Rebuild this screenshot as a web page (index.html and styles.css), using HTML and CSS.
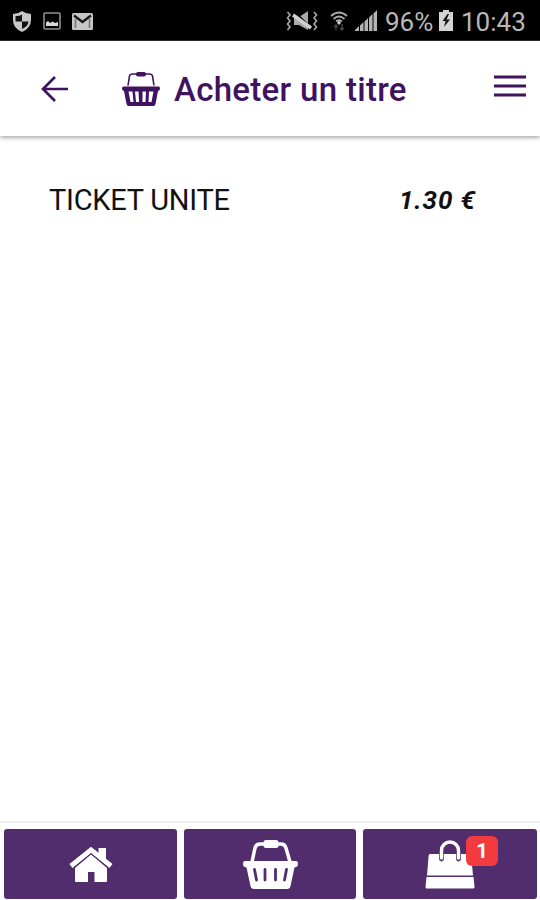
FILE: index.html
```
<!DOCTYPE html>
<html lang="fr">
<head>
  <meta charset="UTF-8">
  <title>Acheter un titre</title>
  <meta name="viewport" content="width=device-width, initial-scale=1.0">
  <link rel="stylesheet" href="styles.css">
</head>
<body>
  <div class="status-bar">
    <div class="status-left">
      <svg width="20" height="23" viewBox="0 0 20 23">
        <path d="M10 1Q14 4 19 4V10Q19 18 10 22Q1 18 1 10V4Q6 4 10 1Z" fill="#c8c8c8"/>
        <path d="M10 4.5V11.5H3.5V6Q7 6.5 10 4.5ZM10 11.5H16.5Q16 16.5 10 19Z" fill="#111"/>
      </svg>
      <svg width="18" height="18" viewBox="0 0 18 18">
        <rect x="1" y="1" width="16" height="16" rx="1" fill="none" stroke="#909090" stroke-width="1.6"/>
        <path d="M3 14V10.500L5 9L7 11L10 9.500L12 11L15 10V14Z" fill="#d8d8d8"/>
      </svg>
      <svg width="21" height="17" viewBox="0 0 21 17">
        <rect width="21" height="17" rx="1.5" fill="#c6c6c6"/>
        <path d="M2 2.5L10.5 9L19 2.5" fill="none" stroke="#171717" stroke-width="2.4"/>
        <path d="M3.5 6V15M17.5 6V15" stroke="#777" stroke-width="1.6"/>
      </svg>
    </div>
    <div class="status-right">
      <svg class="mute" width="32" height="20" viewBox="0 0 32 20">
        <path d="M8 6H13L22 0V19L13 14H8Z" fill="#aaa"/>
        <path d="M7 0L26 18" stroke="#000" stroke-width="2.5"/>
        <path d="M7 4L25 17" stroke="#d0d0d0" stroke-width="3.5"/>
        <path d="M1.500 1L4 4L1.500 7L4 10L1.500 13L4 16L1.500 19M28 1L30.500 4L28 7L30.500 10L28 13L30.500 16L28 19" fill="none" stroke="#aaa" stroke-width="1.6"/>
      </svg>
      <svg class="wifi" width="18" height="20" viewBox="0 0 18 20">
        <path d="M1 5Q9-2 17 5M3.500 8Q9 3 14.500 8M6 10.500Q9 8 12 10.500" fill="none" stroke="#aaa" stroke-width="1.7"/>
        <path d="M9 9L11 12L9 14L7 12Z" fill="#ccc"/>
        <path d="M6 14V19M4 16L6 14L8 16M12 13V19M10 17L12 19L14 17" fill="none" stroke="#444" stroke-width="1.5"/>
      </svg>
      <svg class="signal" width="22" height="21" viewBox="0 0 22 21">
        <path d="M0 20L4 16V21H0ZM5 15.500L8.500 12V21H5ZM9.500 11.500L13 8V21H9.500ZM14 7.500L17.500 4V21H14ZM18.500 3.500L22 0V21H18.500Z" fill="#b4b4b4"/>
      </svg>
      <span class="percent">96%</span>
      <svg class="battery" width="14" height="21" viewBox="0 0 14 21">
        <path d="M4 0H10V2H14V21H0V2H4Z" fill="#d4d4d4"/>
        <path d="M8.500 4L3.500 11H6.500L5 17L11 9.500H7.500L10 4Z" fill="#111"/>
      </svg>
      <span class="clock">10:43</span>
    </div>
  </div>

  <header class="header">
    <svg class="back" width="28" height="28" viewBox="0 0 28 28">
      <path d="M14 2L2 14L14 26M2 14H27" fill="none" stroke="#40125f" stroke-width="2.7"/>
    </svg>
    <svg class="title-icon" width="38" height="34" viewBox="0 0 38 34">
      <path d="M6 13.500L7.500 4Q8 2 10.500 2H27.500Q30 2 30.500 4L32 13.500" fill="none" stroke="#40125f" stroke-width="1.6"/>
      <rect x="14" y="0" width="10" height="4.5" rx="2" fill="#40125f"/>
      <path d="M1.500 14.500H36.500Q38 14.500 38 16.500T36 19L33.500 32Q33 34 31.500 34H6.500Q5 34 4.500 32L2 19Q0 18.500 0 16.500T1.500 14.500Z" fill="#40125f"/>
      <path d="M6.500 19.500H10.500L11.500 30H8.500ZM13 19.500H16.500L17 30H14ZM20.500 19.500H24L23.500 30H20.500ZM27 19.500H31.500L29.500 30H26.500Z" fill="#fff"/>
    </svg>
    <h1>Acheter un titre</h1>
    <svg class="menu" width="32" height="23" viewBox="0 0 32 23">
      <path d="M0 2H32M0 11H32M0 20H32" stroke="#40125f" stroke-width="3.2"/>
    </svg>
  </header>

  <main>
    <div class="ticket">
      <span class="ticket-name">TICKET UNITE</span>
      <span class="ticket-price">1.30 €</span>
    </div>
  </main>

  <nav class="tabs">
    <a class="tab">
      <svg class="home" width="44" height="36" viewBox="0 0 44 36">
        <path d="M29.500 1H37V15L29.500 9Z" fill="#fff"/>
        <path d="M2 19L22 3L42 19" fill="none" stroke="#fff" stroke-width="5"/>
        <path d="M22 7.500L38 21V34Q38 35 37 35H25.500V25H19V35H7Q6 35 6 34V21Z" fill="#fff"/>
        <path d="M5 20.500L22 6.500L39 20.500" fill="none" stroke="#512d6d" stroke-width="1"/>
      </svg>
    </a>
    <a class="tab">
      <svg class="basket" width="55" height="49" viewBox="0 0 55 49">
        <path d="M9 22L12 8Q13 4 17 4H38Q42 4 43 8L47 22" fill="none" stroke="#fff" stroke-width="3.5"/>
        <rect x="20.500" y="0" width="15" height="8" rx="2.5" fill="#fff"/>
        <path d="M2 21H53Q55 21 55 24T51.500 27.500L47.500 46Q47 49 44 49H11Q8 49 7.500 46L3.500 27.500Q0 27 0 24T2 21Z" fill="#fff"/>
        <path d="M11.500 29.500L13.500 40M22 29.500V40M32.500 29.500V40M43.500 29.500L41.500 40" stroke="#512d6d" stroke-width="2.8" stroke-linecap="round"/>
      </svg>
    </a>
    <a class="tab">
      <div class="bag-wrap">
        <svg width="50" height="49" viewBox="0 0 50 49">
          <path d="M5 14H44Q46 14 46.300 17L48 35.500H2L3.500 17Q3.500 14 5 14ZM1.500 37H48.500L49.500 47Q49.500 48.500 48 48.500H2Q.5 48.500.5 47Z" fill="#fff"/>
          <path d="M16.500 19V10.500A8.500 8.500 0 0 1 33.500 10.500V19" fill="none" stroke="#512d6d" stroke-width="4.8" stroke-linecap="round"/>
          <path d="M16.500 18V10.500A8.500 8.500 0 0 1 33.500 10.500V18" fill="none" stroke="#fff" stroke-width="3.4" stroke-linecap="round"/>
        </svg>
        <span class="badge">1</span>
      </div>
    </a>
  </nav>
</body>
</html>
```
FILE: styles.css
```
* {
  box-sizing: border-box;
}
body {
  margin: 0;
  height: 900px;
  display: flex;
  flex-direction: column;
  background: #fff;
  color: #111;
  font-family: Roboto, sans-serif;
  overflow: hidden;
}
svg {
  display: block;
  flex: none;
}
.status-bar {
  height: 41px;
  flex: none;
  display: flex;
  justify-content: space-between;
  align-items: center;
  padding: 1px 14px 0 12px;
  background: #000;
  border-bottom: 1px solid #333;
  color: #b8b8b8;
}
.status-left,
.status-right {
  display: flex;
  align-items: center;
}
.status-left {
  gap: 11px;
  padding-top: 1px;
}
.status-right span {
  font-size: 26px;
  line-height: 40px;
  white-space: nowrap;
  padding-top: 2px;
}
.wifi {
  margin-left: 12px;
}
.signal {
  margin-left: 7px;
}
.percent {
  width: 48px;
  margin-left: 8px;
}
.battery {
  margin-left: 6px;
}
.clock {
  width: 65px;
  margin-left: 8px;
}
.header {
  height: 95px;
  flex: none;
  display: flex;
  align-items: center;
  padding: 0 14px 0 41px;
  box-shadow: 0 1px 5px rgba(0, 0, 0, 0.45);
  color: #40125f;
}
.title-icon {
  margin-left: 53px;
}
h1 {
  margin: 3px 0 0 14px;
  font-size: 33px;
  font-weight: 500;
  line-height: 40px;
  letter-spacing: 0.3px;
  white-space: nowrap;
}
.menu {
  margin: 0 0 4px auto;
}
main {
  flex: 1;
  padding: 44px 65px 0 49px;
}
.ticket {
  display: flex;
  justify-content: space-between;
  align-items: center;
  line-height: 40px;
}
.ticket-name {
  font-size: 29px;
  letter-spacing: -0.25px;
}
.ticket-price {
  font-size: 26px;
  font-weight: 700;
  font-style: italic;
  letter-spacing: 0.9px;
  margin-right: -1px;
}
.tabs {
  height: 79px;
  flex: none;
  display: grid;
  grid-template-columns: 173px 172px 174px;
  gap: 7px;
  padding: 6px 3px 1px 4px;
  border-top: 2px solid #efefef;
}
.tab {
  display: flex;
  align-items: center;
  justify-content: center;
  background: #512d6d;
  border-radius: 3px;
}
.home {
  margin-top: 2px;
}
.bag-wrap {
  position: relative;
}
.badge {
  position: absolute;
  left: 41px;
  top: -4px;
  width: 32px;
  height: 30px;
  border-radius: 6px;
  background: #f13b3e;
  color: #fff;
  font-size: 21px;
  font-weight: 700;
  line-height: 30px;
  text-align: center;
}
```
